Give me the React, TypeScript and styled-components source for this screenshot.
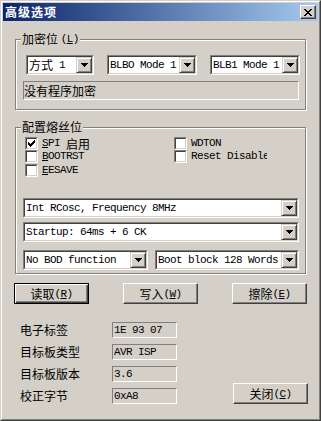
import React from "react";
import styled, { createGlobalStyle } from "styled-components";

const GlobalStyle = createGlobalStyle`
  html, body {
    margin: 0;
    padding: 0;
    background: #d4d0c8;
  }
  body {
    font-family: "Noto Sans CJK SC", "Liberation Sans", sans-serif;
    font-size: 12px;
    color: #000;
  }
`;

const Window = styled.div`
  width: 321px;
  height: 421px;
  box-sizing: border-box;
  border: 1px solid;
  border-color: #d4d0c8 #404040 #404040 #d4d0c8;
  background: #d4d0c8;
`;

const Frame = styled.div`
  height: 100%;
  box-sizing: border-box;
  border: 1px solid;
  border-color: #fff #808080 #808080 #fff;
  padding: 1px;
  display: flex;
  flex-direction: column;
`;

const TitleBar = styled.div`
  height: 18px;
  flex: none;
  display: flex;
  align-items: center;
  justify-content: space-between;
  padding: 0 2px;
  background: linear-gradient(to right, #0a246a, #a6caf0);
`;

const Title = styled.span`
  color: #fff;
  font-weight: bold;
  font-size: 12px;
  letter-spacing: 1px;
  line-height: 18px;
`;

const CaptionButton = styled.div`
  width: 16px;
  height: 14px;
  box-sizing: border-box;
  border: 1px solid;
  border-color: #fff #404040 #404040 #fff;
  box-shadow: inset -1px -1px 0 #808080;
  background: #d4d0c8;
  display: flex;
  align-items: center;
  justify-content: center;
`;

const Body = styled.div`
  flex: 1;
  display: flex;
  flex-direction: column;
  padding: 0 10px 0 11px;
`;

const Group = styled.fieldset<{ $top: number; $pad: string }>`
  margin: ${({ $top }) => $top}px 2px 0 1px;
  padding: ${({ $pad }) => $pad};
  border: 1px solid #808080;
  box-shadow: inset 1px 1px 0 #fff, 1px 1px 0 #fff;
  min-width: 0;
`;

const Legend = styled.legend`
  display: flex;
  align-items: center;
  height: 14px;
  padding: 0 1px;
  margin-left: -2px;
  line-height: 14px;
  font-size: 12px;
  background: #d4d0c8;
  white-space: nowrap;
`;

const Mono = styled.span`
  font-family: "Liberation Mono", monospace;
  font-size: 11px;
  letter-spacing: -0.6px;
`;

const Cn = styled.span`
  font-family: "Noto Sans CJK SC", sans-serif;
  font-size: 12px;
  letter-spacing: 0;
`;

const Key = styled.u`
  text-underline-offset: 1px;
`;

const ComboRow = styled.div<{ $cols: string; $gap: number; $indent?: number }>`
  display: grid;
  grid-template-columns: ${({ $cols }) => $cols};
  column-gap: ${({ $gap }) => $gap}px;
  margin-left: ${({ $indent }) => $indent ?? 0}px;
`;

const ComboBox = styled.div<{ $mt?: number }>`
  height: 20px;
  box-sizing: border-box;
  margin-top: ${({ $mt }) => $mt ?? 0}px;
  border: 1px solid;
  border-color: #808080 #fff #fff #808080;
  display: flex;
  min-width: 0;
`;

const ComboInner = styled.div`
  flex: 1;
  min-width: 0;
  display: flex;
  border: 1px solid;
  border-color: #404040 #d4d0c8 #d4d0c8 #404040;
  background: #fff;
`;

const ComboText = styled.div`
  flex: 1;
  min-width: 0;
  padding-left: 1px;
  line-height: 16px;
  white-space: nowrap;
  overflow: hidden;
  display: flex;
  align-items: center;
`;

const DropButton = styled.div`
  width: 16px;
  height: 16px;
  flex: none;
  box-sizing: border-box;
  border: 1px solid;
  border-color: #d4d0c8 #404040 #404040 #d4d0c8;
  box-shadow: inset 1px 1px 0 #fff, inset -1px -1px 0 #808080;
  background: #d4d0c8;
  display: flex;
  align-items: center;
  justify-content: center;
`;

const StaticField = styled.div<{ $mt?: number; $pad?: number }>`
  box-sizing: border-box;
  margin-top: ${({ $mt }) => $mt ?? 0}px;
  border: 1px solid;
  border-color: #808080 #fff #fff #808080;
  padding-left: ${({ $pad }) => $pad ?? 0}px;
  display: flex;
  align-items: center;
  white-space: nowrap;
  overflow: hidden;
`;

const NoteField = styled(StaticField)`
  height: 19px;
`;

const InfoStatic = styled(StaticField)`
  width: 65px;
  height: 16px;
`;

const CheckGrid = styled.div`
  display: grid;
  grid-template-columns: 149px 93px;
  grid-template-rows: 13px 14px 13px;
  margin-left: 2px;
`;

const CheckItem = styled.div<{ $clip?: boolean }>`
  display: flex;
  align-items: flex-start;
  gap: 4px;
  white-space: nowrap;
  overflow-x: ${({ $clip }) => ($clip ? "clip" : "visible")};
`;

const CheckBox = styled.div`
  width: 13px;
  height: 13px;
  flex: none;
  box-sizing: border-box;
  border: 1px solid;
  border-color: #808080 #fff #fff #808080;
  display: flex;
`;

const CheckInner = styled.div`
  flex: 1;
  border: 1px solid;
  border-color: #404040 #d4d0c8 #d4d0c8 #404040;
  background: #fff;
  display: flex;
  align-items: center;
  justify-content: center;
`;

const CheckLabel = styled.span`
  line-height: 13px;
  display: flex;
  align-items: center;
`;

const ButtonRow = styled.div`
  display: flex;
  justify-content: space-between;
  margin-top: 9px;
  padding-right: 1px;
`;

const Button = styled.div<{ $default?: boolean }>`
  width: 75px;
  height: 21px;
  box-sizing: border-box;
  background: #d4d0c8;
  display: flex;
  align-items: center;
  justify-content: center;
  border: 1px solid;
  border-color: ${({ $default }) =>
    $default ? "#000" : "#fff #404040 #404040 #fff"};
  box-shadow: ${({ $default }) =>
    $default
      ? "inset 1px 1px 0 #fff, inset -1px -1px 0 #404040, inset -2px -2px 0 #808080"
      : "inset -1px -1px 0 #808080"};
  white-space: nowrap;
`;

const InfoArea = styled.div`
  display: flex;
  justify-content: space-between;
  margin-top: 18px;
`;

const InfoGrid = styled.div`
  display: grid;
  grid-template-columns: 92px 65px;
  grid-auto-rows: 16px;
  row-gap: 6px;
  padding-left: 6px;
`;

const InfoLabel = styled.div`
  line-height: 16px;
  white-space: nowrap;
`;

const CloseButton = styled(Button)`
  align-self: flex-end;
`;

const Arrow = () => (
  <svg width="7" height="4" viewBox="0 0 7 4" shapeRendering="crispEdges">
    <path d="M0 0h7v1h-1v1h-1v1h-1v1h-1v-1h-1v-1h-1v-1h-1z" fill="#000" />
  </svg>
);

const CheckMark = () => (
  <svg width="7" height="7" viewBox="0 0 7 7" shapeRendering="crispEdges">
    <path
      d="M0 2h1v3h-1zM1 3h1v3h-1zM2 4h1v3h-1zM3 3h1v3h-1zM4 2h1v3h-1zM5 1h1v3h-1zM6 0h1v3h-1z"
      fill="#000"
    />
  </svg>
);

const CloseGlyph = () => (
  <svg width="8" height="7" viewBox="0 0 8 7" shapeRendering="crispEdges">
    <path
      d="M0 0h2v1h-2zM6 0h2v1h-2zM1 1h2v1h-2zM5 1h2v1h-2zM2 2h4v1h-4zM3 3h2v1h-2zM2 4h4v1h-4zM1 5h2v1h-2zM5 5h2v1h-2zM0 6h2v1h-2zM6 6h2v1h-2z"
      fill="#000"
    />
  </svg>
);

const Combo = ({ children, mt }: { children: React.ReactNode; mt?: number }) => (
  <ComboBox $mt={mt}>
    <ComboInner>
      <ComboText>{children}</ComboText>
      <DropButton>
        <Arrow />
      </DropButton>
    </ComboInner>
  </ComboBox>
);

const Check = ({
  checked,
  clip,
  children,
}: {
  checked?: boolean;
  clip?: boolean;
  children: React.ReactNode;
}) => (
  <CheckItem $clip={clip}>
    <CheckBox>
      <CheckInner>{checked && <CheckMark />}</CheckInner>
    </CheckBox>
    <CheckLabel>{children}</CheckLabel>
  </CheckItem>
);

const Mnemonic = ({ k }: { k: string }) => (
  <Mono>
    (<Key>{k}</Key>)
  </Mono>
);

const info = [
  { label: "电子标签", value: "1E 93 07" },
  { label: "目标板类型", value: "AVR ISP" },
  { label: "目标板版本", value: "3.6" },
  { label: "校正字节", value: "0xA8" },
];

export default function App() {
  return (
    <>
      <GlobalStyle />
      <Window>
        <Frame>
          <TitleBar>
            <Title>高级选项</Title>
            <CaptionButton>
              <CloseGlyph />
            </CaptionButton>
          </TitleBar>
          <Body>
            <Group $top={11} $pad="9px 6px 9px 7px">
              <Legend>
                <Cn>加密位&nbsp;</Cn>
                <Mnemonic k="L" />
              </Legend>
              <ComboRow $cols="68px 90px 90px" $gap={13} $indent={3}>
                <Combo>
                  <Cn>方式</Cn>
                  <Mono>&nbsp;1</Mono>
                </Combo>
                <Combo>
                  <Mono>BLBO Mode 1</Mono>
                </Combo>
                <Combo>
                  <Mono>BLB1 Mode 1</Mono>
                </Combo>
              </ComboRow>
              <NoteField $mt={6}>没有程序加密</NoteField>
            </Group>

            <Group $top={10} $pad="3px 6px 3px 7px">
              <Legend>配置熔丝位</Legend>
              <CheckGrid>
                <Check checked>
                  <Mono>
                    <Key>S</Key>PI&nbsp;
                  </Mono>
                  <Cn>启用</Cn>
                </Check>
                <Check>
                  <Mono>WDTON</Mono>
                </Check>
                <Check>
                  <Mono>
                    <Key>B</Key>OOTRST
                  </Mono>
                </Check>
                <Check clip>
                  <Mono>Reset Disable</Mono>
                </Check>
                <Check>
                  <Mono>
                    <Key>E</Key>ESAVE
                  </Mono>
                </Check>
              </CheckGrid>
              <Combo mt={21}>
                <Mono>Int RCosc, Frequency 8MHz</Mono>
              </Combo>
              <Combo mt={4}>
                <Mono>Startup: 64ms + 6 CK</Mono>
              </Combo>
              <ComboRow $cols="125px 1fr" $gap={7}>
                <Combo mt={8}>
                  <Mono>No BOD function</Mono>
                </Combo>
                <Combo mt={8}>
                  <Mono>Boot block 128 Words</Mono>
                </Combo>
              </ComboRow>
            </Group>

            <ButtonRow>
              <Button $default>
                <Cn>读取</Cn>
                <Mnemonic k="R" />
              </Button>
              <Button>
                <Cn>写入</Cn>
                <Mnemonic k="W" />
              </Button>
              <Button>
                <Cn>擦除</Cn>
                <Mnemonic k="E" />
              </Button>
            </ButtonRow>

            <InfoArea>
              <InfoGrid>
                {info.map((row) => (
                  <React.Fragment key={row.label}>
                    <InfoLabel>{row.label}</InfoLabel>
                    <InfoStatic $pad={1}>
                      <Mono>{row.value}</Mono>
                    </InfoStatic>
                  </React.Fragment>
                ))}
              </InfoGrid>
              <CloseButton>
                <Cn>关闭</Cn>
                <Mnemonic k="C" />
              </CloseButton>
            </InfoArea>
          </Body>
        </Frame>
      </Window>
    </>
  );
}
